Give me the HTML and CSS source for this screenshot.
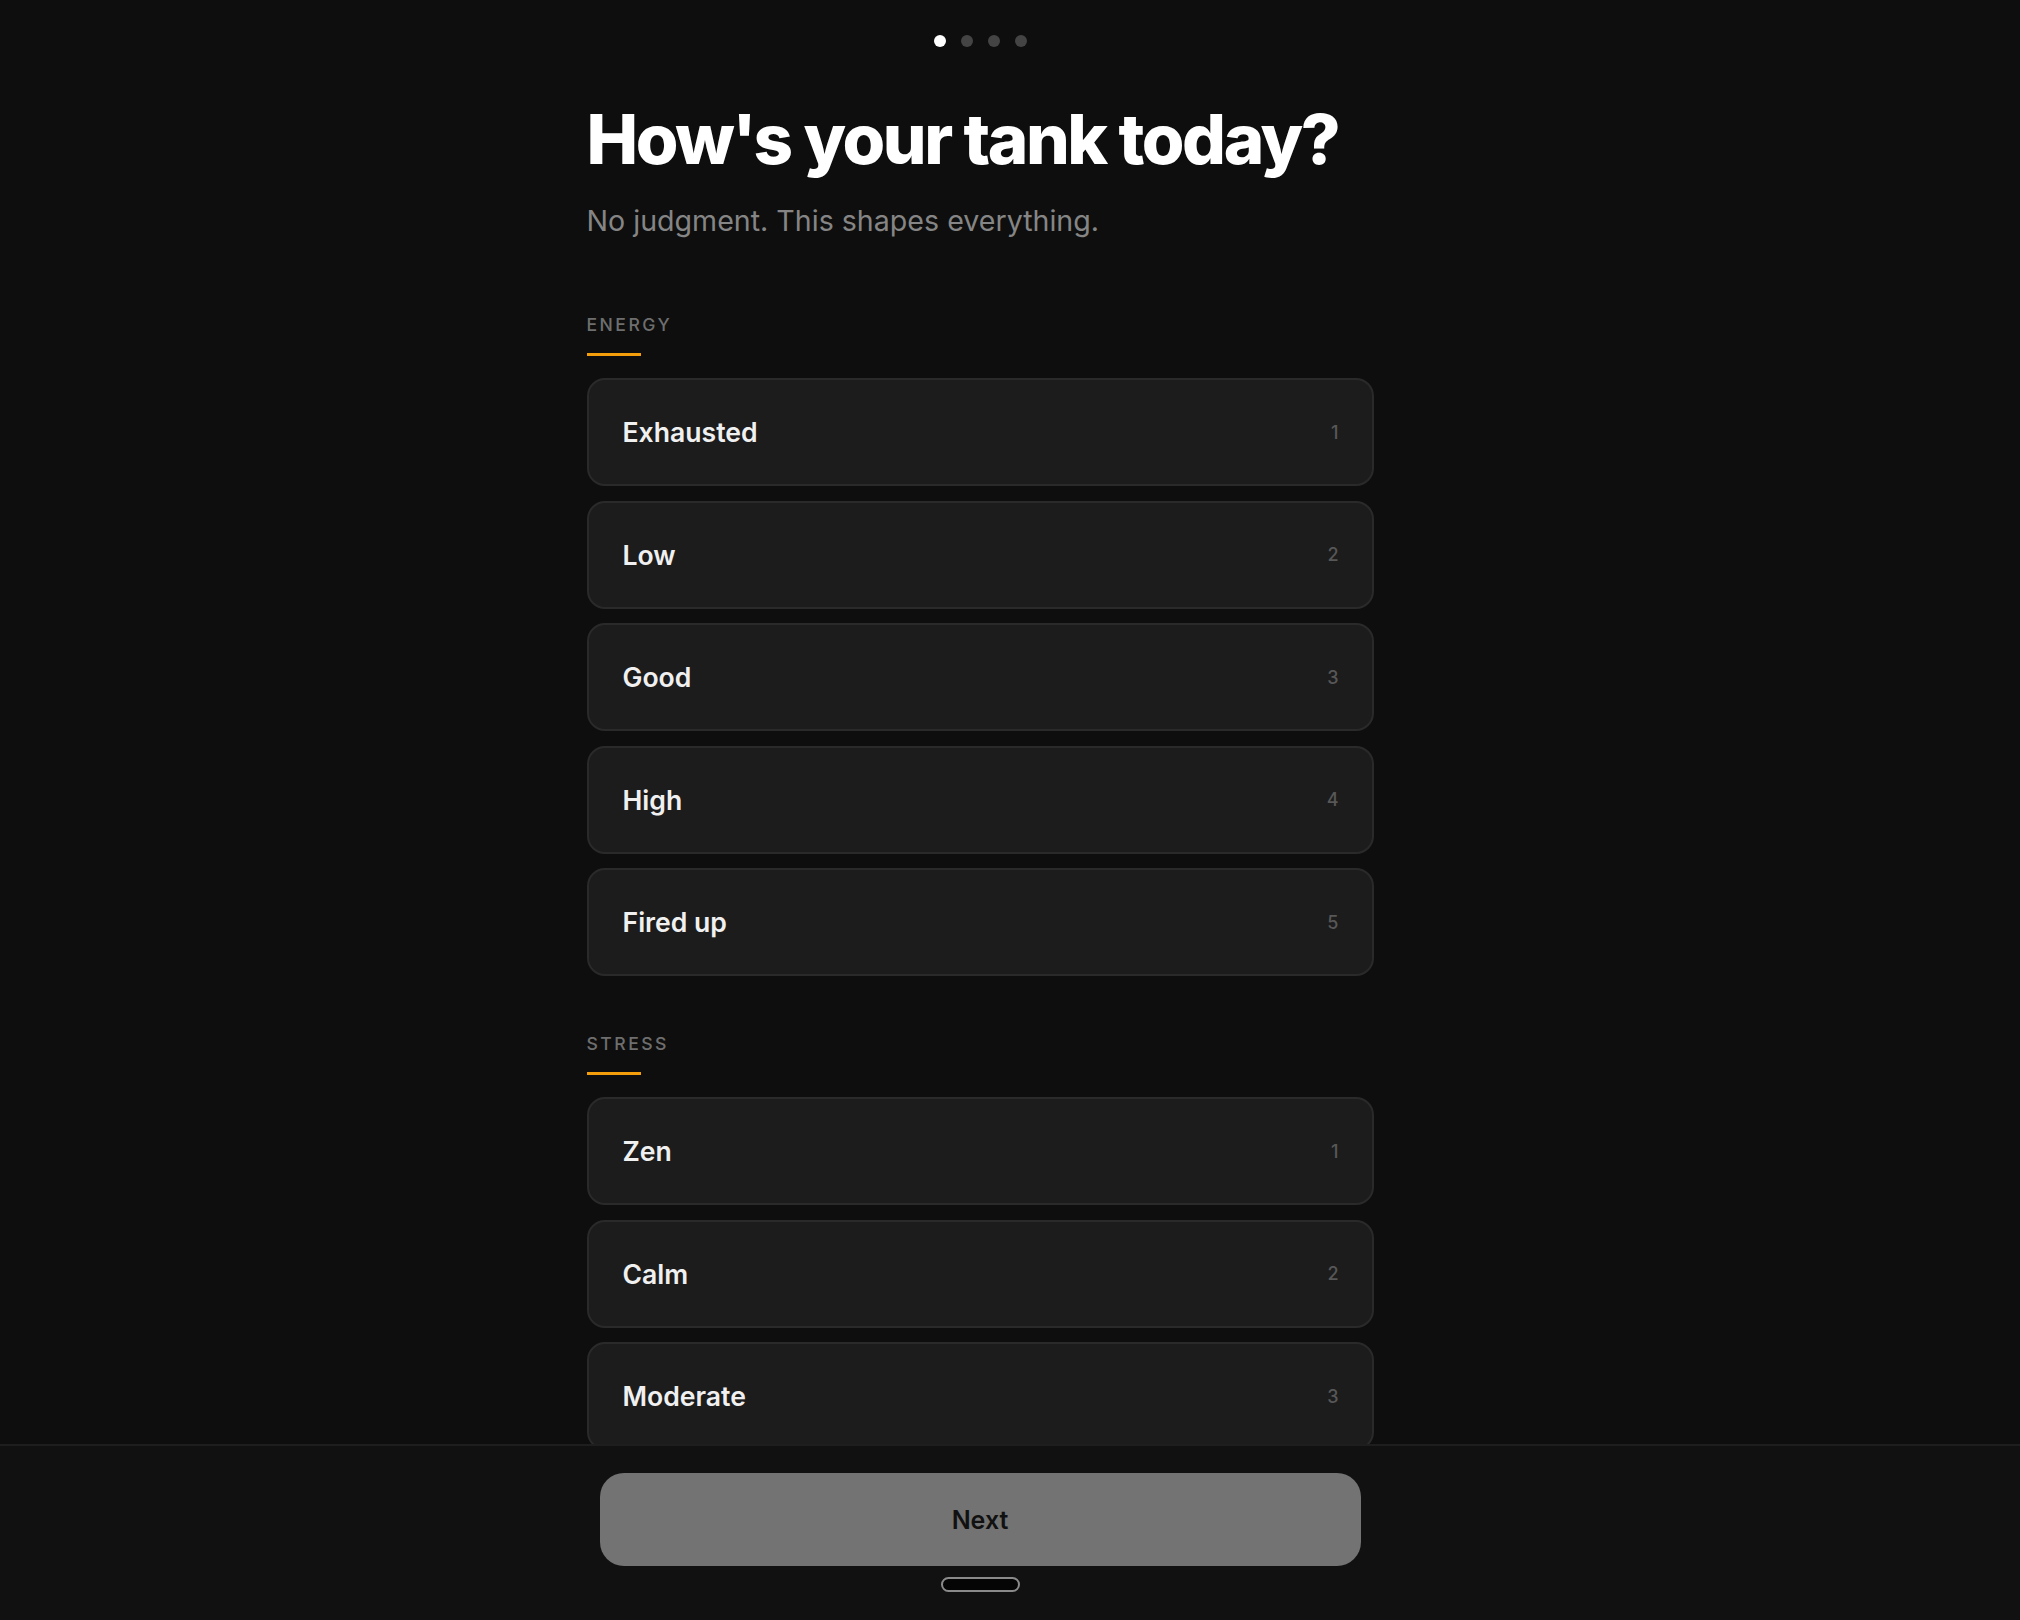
FILE: index.html
```html
<!DOCTYPE html>
<html lang="en">
<head>
<meta charset="utf-8">
<title>How's your tank today?</title>
<link rel="stylesheet" href="styles.css">
</head>
<body>
<div class="page">
  <main class="screen">
    <div class="dots">
      <span class="dot active"></span>
      <span class="dot"></span>
      <span class="dot"></span>
      <span class="dot"></span>
    </div>
    <h1 class="title">How's your tank today?</h1>
    <p class="subtitle">No judgment. This shapes everything.</p>

    <section class="group">
      <div class="label">ENERGY</div>
      <div class="options">
        <div class="option"><span class="opt-text">Exhausted</span><span class="opt-num">1</span></div>
        <div class="option"><span class="opt-text">Low</span><span class="opt-num">2</span></div>
        <div class="option"><span class="opt-text">Good</span><span class="opt-num">3</span></div>
        <div class="option"><span class="opt-text">High</span><span class="opt-num">4</span></div>
        <div class="option"><span class="opt-text">Fired up</span><span class="opt-num">5</span></div>
      </div>
    </section>

    <section class="group">
      <div class="label">STRESS</div>
      <div class="options">
        <div class="option"><span class="opt-text">Zen</span><span class="opt-num">1</span></div>
        <div class="option"><span class="opt-text">Calm</span><span class="opt-num">2</span></div>
        <div class="option"><span class="opt-text">Moderate</span><span class="opt-num">3</span></div>
      </div>
    </section>
  </main>
</div>
<footer class="bottom-bar">
  <div class="bar-inner">
    <button class="next-btn">Next</button>
    <div class="home-indicator"></div>
  </div>
</footer>
</body>
</html>
```

FILE: styles.css
```css
html, body {
  margin: 0;
  padding: 0;
  background: #0e0e0e;
  height: 100%;
  overflow: hidden;
}

body {
  font-family: Inter, "Noto Sans", "Liberation Sans", sans-serif;
  color: #ffffff;
}

.page {
  padding-right: 60px;
}

.screen {
  width: 787px;
  margin: 0 auto;
  padding-top: 35px;
}

.dots {
  display: flex;
  justify-content: center;
  gap: 15px;
}

.dot {
  width: 12px;
  height: 12px;
  border-radius: 50%;
  background: #444444;
}

.dot.active {
  background: #ffffff;
}

.title {
  margin: 55px 0 0;
  font-size: 69px;
  font-weight: 800;
  letter-spacing: -0.035em;
  line-height: 1.1;
  color: #ffffff;
}

.subtitle {
  margin: 24px 0 0;
  font-size: 28.6px;
  font-weight: 400;
  color: #858585;
  line-height: 1.3;
}

.group {
  margin-top: 76px;
}

.group + .group {
  margin-top: 58px;
}

.label {
  font-size: 17.6px;
  font-weight: 500;
  letter-spacing: 0.14em;
  color: #6e6e6e;
  line-height: 20px;
  padding-bottom: 21px;
  position: relative;
}

.label::after {
  content: "";
  display: block;
  width: 54px;
  height: 3px;
  background: #f59e0b;
  position: absolute;
  left: 0;
  bottom: 0;
}

.options {
  margin-top: 22px;
  display: flex;
  flex-direction: column;
  gap: 14.5px;
}

.option {
  height: 108px;
  box-sizing: border-box;
  border: 2px solid #2a2a2a;
  border-radius: 18px;
  background: #1c1c1c;
  display: flex;
  align-items: center;
  justify-content: space-between;
  padding: 0 33px 0 34px;
}

.opt-text {
  font-size: 26.6px;
  font-weight: 600;
  color: #f0f0f0;
}

.opt-num {
  font-size: 18px;
  font-weight: 500;
  color: #575757;
}

.bottom-bar {
  position: fixed;
  left: 0;
  right: 0;
  bottom: 0;
  height: 176px;
  box-sizing: border-box;
  background: #111111;
  border-top: 2px solid #1e1e1e;
  padding-right: 60px;
}

.bar-inner {
  width: 761px;
  margin: 0 auto;
  padding-top: 27px;
  display: flex;
  flex-direction: column;
  align-items: center;
}

.next-btn {
  width: 761px;
  height: 93px;
  border: none;
  border-radius: 24px;
  background: #737373;
  color: #111111;
  font-family: Inter, "Noto Sans", "Liberation Sans", sans-serif;
  font-size: 25px;
  font-weight: 600;
}

.home-indicator {
  margin-top: 11px;
  width: 79px;
  height: 15px;
  box-sizing: border-box;
  border: 2px solid #8a8a8a;
  border-radius: 8px;
  background: #050505;
}
```
